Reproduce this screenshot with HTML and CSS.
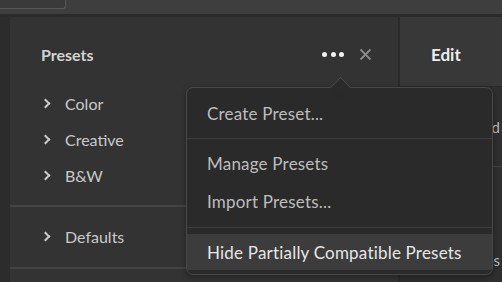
FILE: index.html
```html
<!DOCTYPE html>
<html lang="en">
<head>
  <meta charset="UTF-8">
  <title>Presets</title>
  <link rel="stylesheet" href="styles.css">
</head>
<body>
  <div class="topbar">
    <div class="topbar-tab"></div>
  </div>

  <div class="workspace">
    <div class="rail"></div>

    <div class="presets-panel">
      <div class="panel-header">
        <span class="panel-title">Presets</span>
        <div class="panel-actions">
          <span class="more-btn"><i></i><i></i><i></i></span>
          <svg class="close-btn" width="13" height="13" viewBox="0 0 13 13">
            <path d="M1.5 1.5 L11.5 11.5 M11.5 1.5 L1.5 11.5" stroke="#8a8a8a" stroke-width="1.8" fill="none"/>
          </svg>
        </div>
      </div>

      <div class="preset-group">
        <div class="preset-item"><span class="chevron"></span>Color</div>
        <div class="preset-item"><span class="chevron"></span>Creative</div>
        <div class="preset-item"><span class="chevron"></span>B&amp;W</div>
      </div>
      <div class="preset-group defaults">
        <div class="preset-item"><span class="chevron"></span>Defaults</div>
      </div>

      <div class="menu">
        <span class="menu-arrow"></span>
        <div class="menu-section first">
          <div class="menu-item">Create Preset...</div>
        </div>
        <div class="menu-section">
          <div class="menu-item tall">Manage Presets</div>
          <div class="menu-item tall">Import Presets...</div>
        </div>
        <div class="menu-section last">
          <div class="menu-item active">Hide Partially Compatible Presets</div>
        </div>
      </div>
    </div>

    <div class="vsep"></div>

    <div class="edit-panel">
      <div class="edit-header">Edit</div>
      <div class="edit-row">Profile: Add</div>
      <div class="edit-row lower">Photos</div>
    </div>
  </div>
</body>
</html>
```

FILE: styles.css
```css
* {
  box-sizing: border-box;
}

body {
  margin: 0;
  width: 502px;
  height: 282px;
  overflow: hidden;
  background: #323232;
  font-family: Lato, 'Noto Sans', sans-serif;
  color: #c8c8c8;
}

.topbar {
  height: 14px;
  background: #3e3e3e;
  border-bottom: 3px solid #2a2a2a;
  box-sizing: content-box;
}

.topbar-tab {
  width: 66px;
  height: 9px;
  background: #3a3a3a;
  border-right: 1px solid #575757;
  border-bottom: 1px solid #575757;
  border-bottom-right-radius: 3px;
}

.workspace {
  display: flex;
  height: 265px;
}

.rail {
  width: 10px;
  background: #2c2c2c;
}

.presets-panel {
  position: relative;
  width: 388px;
  background: #333333;
}

.panel-header {
  height: 68px;
  padding: 6px 26px 0 31px;
  display: flex;
  align-items: center;
  justify-content: space-between;
}

.panel-title {
  font-size: 16px;
  font-weight: 700;
  color: #d2d2d2;
}

.panel-actions {
  display: flex;
  align-items: center;
  gap: 15px;
}

.more-btn {
  display: flex;
  gap: 3.5px;
}

.more-btn i {
  width: 5px;
  height: 5px;
  border-radius: 50%;
  background: #f2f2f2;
}

.close-btn {
  display: block;
}

.preset-group {
  padding-bottom: 12px;
  border-bottom: 2px solid #444444;
}

.preset-group.defaults {
  padding: 11px 0 13px;
}

.preset-item {
  height: 36px;
  display: flex;
  align-items: center;
  padding-left: 32px;
  font-size: 16px;
  color: #c9c9c9;
}

.chevron {
  width: 7px;
  height: 7px;
  border-top: 2px solid #c9c9c9;
  border-right: 2px solid #c9c9c9;
  transform: rotate(45deg);
  margin-right: 16px;
}

.menu {
  position: absolute;
  left: 176px;
  top: 70px;
  width: 307px;
  height: 188px;
  background: #2a2a2a;
  border: 1px solid #484848;
  border-radius: 7px;
  box-shadow: 0 2px 6px rgba(0, 0, 0, 0.35);
}

.menu-arrow {
  position: absolute;
  left: 146px;
  top: -8px;
  width: 15px;
  height: 15px;
  background: #2a2a2a;
  border-top: 1px solid #484848;
  border-left: 1px solid #484848;
  transform: rotate(45deg);
}

.menu-section {
  position: relative;
  padding: 5px 0 7px;
  border-bottom: 1px solid #3c3c3c;
}

.menu-section.first {
  padding: 7px 0;
}

.menu-section.last {
  border-bottom: none;
  padding: 6px 0 0;
}

.menu-item {
  height: 36px;
  display: flex;
  align-items: center;
  padding-left: 20px;
  font-size: 17px;
  letter-spacing: 0.2px;
  color: #bdbdbd;
}

.menu-item.tall {
  height: 38px;
}

.menu-item.active {
  background: #3c3c3c;
  color: #e6e6e6;
}

.vsep {
  width: 2px;
  background: #2a2a2a;
}

.edit-panel {
  flex: 1;
  background: #2f2f2f;
  overflow: hidden;
}

.edit-header {
  height: 70px;
  padding: 6px 0 0 31px;
  background: #383838;
  border-bottom: 1px solid #2a2a2a;
  display: flex;
  align-items: center;
  font-size: 17px;
  font-weight: 700;
  color: #ececec;
}

.edit-row {
  height: 80px;
  display: flex;
  align-items: center;
  justify-content: flex-end;
  white-space: nowrap;
  padding-right: 2px;
  font-size: 15px;
  color: #bbbbbb;
  border-bottom: 1px solid #444444;
}

.edit-row.lower {
  height: 110px;
  align-items: flex-end;
  padding-bottom: 8px;
  border-bottom: none;
}
```
